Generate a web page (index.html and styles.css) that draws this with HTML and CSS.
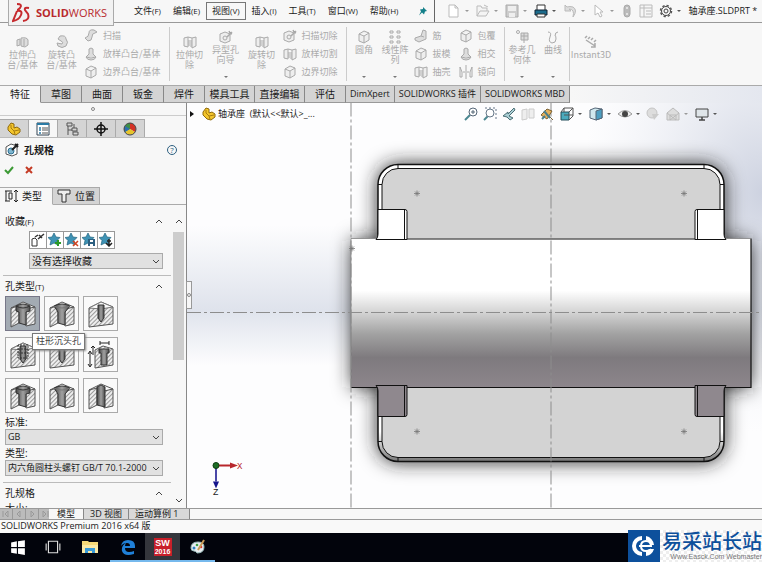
FILE: index.html
```html
<!DOCTYPE html>
<html lang="zh-CN">
<head>
  <meta charset="UTF-8" />
  <meta name="viewport" content="width=device-width, initial-scale=1.0"/>
  <title>SOLIDWORKS</title>
  <link rel="stylesheet" href="styles.css">
</head>
<body>
  <!-- shared icons -->
  <svg class="defs" aria-hidden="true">
    <defs>
      <pattern id="hatch" width="3" height="3" patternUnits="userSpaceOnUse" patternTransform="rotate(45)">
        <rect width="3" height="3" fill="#eee"/>
        <rect width="1" height="3" fill="#999"/>
      </pattern>
      <linearGradient id="bore">
        <stop offset="0" stop-color="#444"/><stop offset=".5" stop-color="#a0a0a0"/><stop offset="1" stop-color="#4a4a4a"/>
      </linearGradient>
      <symbol id="part" viewBox="0 0 14 14">
        <path d="M1 5l3-4 3 1v4l3-1 3 2v3l-4 3-4-1-4-4z" fill="#f3c52c" stroke="#8f6a0c"/>
        <path d="M4 3v3l3 3 5-1M7 9l1 3" fill="none" stroke="#a87d10"/>
      </symbol>
      <symbol id="block" viewBox="0 0 33 33">
        <path d="M5 11l12-6 12 5-12 4z" fill="#fafafa" stroke="#555"/>
        <path d="M5 11l8-2v17l-8 4z" fill="url(#hatch)" stroke="#555"/>
        <path d="M20 12l9-2v17l-9 2z" fill="url(#hatch)" stroke="#555"/>
      </symbol>
      <symbol id="counterbore" viewBox="0 0 33 33">
        <use href="#block"/>
        <path d="M10 9q7-4 14 0v5l-4 1v13l-7-2V15l-3-1z" fill="url(#bore)" stroke="#333"/>
        <path d="M10 9q7 4 14 0" fill="none" stroke="#333"/>
      </symbol>
      <symbol id="countersink" viewBox="0 0 33 33">
        <use href="#block"/>
        <path d="M9 9q8-4 16 0l-5 6v13l-7-2V15z" fill="url(#bore)" stroke="#333"/>
        <path d="M9 9q8 4 16 0" fill="none" stroke="#777"/>
      </symbol>
      <symbol id="drill" viewBox="0 0 33 33">
        <path d="M5 11l12-6 12 5v17l-24 3z" fill="url(#hatch)" stroke="#555"/>
        <path d="M5 11l12-6 12 5-12 2z" fill="#fafafa" stroke="#777"/>
        <path d="M14 8h6v13l-3 4-3-4z" fill="url(#bore)" stroke="#333"/>
      </symbol>
      <symbol id="tap" viewBox="0 0 33 33">
        <use href="#drill"/>
        <path d="M12 7v13h10V7zM12 11h10M12 15h10" fill="none" stroke="#333" stroke-dasharray="2 1"/>
      </symbol>
      <symbol id="legacy" viewBox="0 0 33 33">
        <path d="M11 12l8-4 10 3v16l-18 3z" fill="url(#hatch)" stroke="#555"/>
        <path d="M15 11h10v4h-2v12h-6V15h-2z" fill="url(#bore)" stroke="#333"/>
        <path d="M6 14v14M4 16l2-3 2 3M4 26l2 3 2-3M9 8v9M7 10l2-2 2 2M16 5h9M16 3v4M25 3v4" fill="none" stroke="#222"/>
      </symbol>
      <symbol id="slot" viewBox="0 0 33 33">
        <use href="#block"/>
        <path d="M13 8l4-2 4 2v20l-8-2z" fill="url(#bore)" stroke="#333"/>
      </symbol>
      <symbol id="star" viewBox="0 0 14 14">
        <path d="M6 0l2 4 4 .5-3 3 1 4.500L6 10l-4 2 1-4.500-3-3L4 4z" fill="#3f93b5" stroke="#226480" stroke-width=".7"/>
      </symbol>
      <symbol id="chev-down" viewBox="0 0 8 5"><path d="M1 1l3 3 3-3" fill="none" stroke="#444"/></symbol>
      <symbol id="chev-up" viewBox="0 0 8 5"><path d="M1 4l3-3 3 3" fill="none" stroke="#444"/></symbol>
      <!-- greyed out feature icons -->
      <symbol id="f-box" viewBox="0 0 14 14">
        <path d="M2 4l5-3 5 2v7l-5 3-5-2zM2 4l5 2 5-3M7 6v7" fill="#eee" stroke="currentColor"/>
      </symbol>
      <symbol id="f-extrude" viewBox="0 0 14 14">
        <path d="M1 5l3-1v6l-3 1zM5 3q6-1 7 2v5l-3 2-4-1zM8 4v7" fill="#ddd" stroke="currentColor"/>
      </symbol>
      <symbol id="f-revolve" viewBox="0 0 14 14">
        <path d="M5 1q6-1 6 3 3 3 0 7-4 3-8 0l-1-3 5 1q2-2-1-3L3 4z" fill="#ddd" stroke="currentColor"/>
      </symbol>
      <symbol id="f-sweep" viewBox="0 0 14 14">
        <path d="M1 9q4-1 4-5t5-3l3 2-2 1q-3 0-3 4t-4 4z" fill="#ddd" stroke="currentColor"/>
      </symbol>
      <symbol id="f-loft" viewBox="0 0 14 14">
        <path d="M5 2q2-2 4 0v5l3 3q-1 3-5 3t-5-3l3-3zM2 10q5 2 10 0" fill="#ddd" stroke="currentColor"/>
      </symbol>
      <symbol id="f-cut" viewBox="0 0 14 14">
        <path d="M1 3l4-1v10l-4-1zM9 3l4-1v9l-4 2zM5 2l4 1M6 5v6M8 5v7" fill="#eee" stroke="currentColor"/>
      </symbol>
      <symbol id="f-wizard" viewBox="0 0 14 14">
        <path d="M1 4l5-2 5 2v7l-5 2-5-2z" fill="#eee" stroke="currentColor"/>
        <circle cx="6" cy="8" r="2" fill="none" stroke="currentColor"/>
        <path d="M8 7l5-5M10 1l1 2 2 1" stroke="currentColor" stroke-width="1.500"/>
      </symbol>
      <symbol id="f-pattern" viewBox="0 0 14 14">
        <path d="M2 1h3v2H2zM9 1h3v2H9zM2 6h3v2H2zM9 6h3v2H9zM2 11h3v2H2zM9 11h3v2H9z" fill="none" stroke="currentColor"/>
      </symbol>
      <symbol id="f-rib" viewBox="0 0 14 14">
        <path d="M1 9l6-2 2-6 3 1v8l-7 3-4-2zM7 7l3 1" fill="#ddd" stroke="currentColor"/>
      </symbol>
      <symbol id="f-mirror" viewBox="0 0 14 14">
        <path d="M1 2v10h2V7L1 2M13 2v10h-2V7l2-5M7 0v14M4 7h2M8 7h2" fill="none" stroke="currentColor"/>
      </symbol>
      <symbol id="f-curve" viewBox="0 0 14 14">
        <path d="M2 2q4 0 2 5t2 6q4 0 4-4T9 6q0-4 3-4" fill="none" stroke="currentColor"/>
      </symbol>
      <symbol id="f-ref" viewBox="0 0 14 14">
        <circle cx="3" cy="2" r="1.500" fill="none" stroke="currentColor"/>
        <path d="M6 3h7v7H6zM9 3v10M6 6h7" fill="#ddd" stroke="currentColor"/>
      </symbol>
      <symbol id="f-instant" viewBox="0 0 14 14">
        <path d="M1 3l2-2M4 4l2-2M7 5l2-2M10 7l2-2M2 5l9 6M11 8v4H7" fill="none" stroke="currentColor" stroke-width="1.500"/>
      </symbol>
    </defs>
  </svg>

  <header class="topbar">
    <div class="logo">
      <svg class="logo-mark" viewBox="0 0 20 20">
        <path d="M5 1q6 0 3 4-2 2-3 2" fill="none" stroke="#c62a2e" stroke-width="2"/>
        <path d="M5 8q6-1 4 4-2 5-8 6 2-5 4-10M17 5q-5-1-4 2l3 4q2 6-5 7" fill="none" stroke="#c62a2e" stroke-width="2"/>
      </svg>
      <span class="logo-text"><b>SOLID</b>WORKS</span>
    </div>
    <nav class="menus">
      <button>文件<span class="key">(F)</span></button>
      <button>编辑<span class="key">(E)</span></button>
      <button class="open">视图<span class="key">(V)</span></button>
      <button>插入<span class="key">(I)</span></button>
      <button>工具<span class="key">(T)</span></button>
      <button>窗口<span class="key">(W)</span></button>
      <button>帮助<span class="key">(H)</span></button>
    </nav>
    <button class="pin" aria-label="Pin"><svg viewBox="0 0 10 10"><path d="M5 1l4 4-2 .5-1 3-2-2-3 3 2-4-1-2 3-.5z" fill="#14808a"/></svg></button>
    <div class="quick">
      <button class="off drop" aria-label="New"><svg viewBox="0 0 14 14"><path d="M2 1h6l3 3v9H2zM8 1v3h3" fill="#fff" stroke="#bbb"/></svg></button>
      <button class="off drop" aria-label="Open"><svg viewBox="0 0 14 14"><path d="M1 12V2h4l1 2h5v3M1 12l3-5h9l-3 5zM8 1l4 2" fill="#f4f4f4" stroke="#bbb"/></svg></button>
      <button class="off drop" aria-label="Save"><svg viewBox="0 0 14 14"><path d="M1 1h12v12H1z" fill="#ccc" stroke="#aaa"/><path d="M3 2h8v5H3zM4 9h6v4H4z" fill="#eee"/></svg></button>
      <button class="drop" aria-label="Print"><svg viewBox="0 0 14 14"><path d="M3 1h8v6H3z" fill="#fff" stroke="#333"/><path d="M1 6h12v5H1z" fill="#1c6c8c" stroke="#123"/><path d="M3 10h8v3H3z" fill="#fff" stroke="#333"/></svg></button>
      <button class="off drop" aria-label="Undo"><svg viewBox="0 0 14 14"><path d="M2 1v6h6L6 5q6 0 4 8 5-7 0-10-3-1-6 0z" fill="#ddd" stroke="#bbb"/></svg></button>
      <button class="off drop" aria-label="Select"><svg viewBox="0 0 14 14"><path d="M3 1v10l3-2 2 4 2-1-2-4h3z" fill="#fff" stroke="#bbb"/></svg></button>
      <button class="off" aria-label="Rebuild"><svg viewBox="0 0 14 14"><rect x="4" y="1" width="6" height="12" rx="3" fill="#bbb" stroke="#aaa"/><circle cx="7" cy="4" r="1" fill="#eee"/><circle cx="7" cy="10" r="1" fill="#eee"/></svg></button>
      <button class="off" aria-label="Properties"><svg viewBox="0 0 14 14"><path d="M1 1h12v12H1zM5 1v12M1 4h12M7 7h5M7 10h5" fill="#f6f6f6" stroke="#bbb"/></svg></button>
      <button class="drop" aria-label="Options"><svg viewBox="0 0 14 14"><circle cx="7" cy="7" r="5.500" fill="none" stroke="#555" stroke-width="1.500" stroke-dasharray="2.300 2"/><circle cx="7" cy="7" r="4.500" fill="#f6f6f6" stroke="#444"/><circle cx="7" cy="7" r="2" fill="none" stroke="#444"/></svg></button>
    </div>
    <span class="doc-name">轴承座.SLDPRT *</span>
  </header>

  <section class="ribbon">
    <div class="group">
      <button class="big low wide"><svg><use href="#f-extrude"/></svg><span>拉伸凸<br>台/基体</span></button>
      <button class="big low wide"><svg><use href="#f-revolve"/></svg><span>旋转凸<br>台/基体</span></button>
      <div class="stack">
        <button><svg><use href="#f-sweep"/></svg>扫描</button>
        <button><svg><use href="#f-loft"/></svg>放样凸台/基体</button>
        <button><svg><use href="#f-box"/></svg>边界凸台/基体</button>
      </div>
    </div>
    <div class="group">
      <button class="big low"><svg><use href="#f-cut"/></svg><span>拉伸切<br>除</span></button>
      <button class="big arrow"><svg><use href="#f-wizard"/></svg><span>异型孔<br>向导</span></button>
      <button class="big low"><svg><use href="#f-cut"/></svg><span>旋转切<br>除</span></button>
      <div class="stack">
        <button><svg><use href="#f-wizard"/></svg>扫描切除</button>
        <button><svg><use href="#f-cut"/></svg>放样切割</button>
        <button><svg><use href="#f-box"/></svg>边界切除</button>
      </div>
    </div>
    <div class="group">
      <button class="big arrow slim"><svg><use href="#f-box"/></svg><span>圆角</span></button>
      <button class="big arrow slim"><svg><use href="#f-pattern"/></svg><span>线性阵<br>列</span></button>
      <div class="stack">
        <button><svg><use href="#f-rib"/></svg>筋</button>
        <button><svg><use href="#f-box"/></svg>拔模</button>
        <button><svg><use href="#f-cut"/></svg>抽壳</button>
      </div>
      <div class="stack">
        <button><svg><use href="#f-box"/></svg>包覆</button>
        <button><svg><use href="#f-loft"/></svg>相交</button>
        <button><svg><use href="#f-mirror"/></svg>镜向</button>
      </div>
    </div>
    <div class="group tight">
      <button class="big arrow slim"><svg><use href="#f-ref"/></svg><span>参考几<br>何体</span></button>
      <button class="big arrow slim"><svg><use href="#f-curve"/></svg><span>曲线</span></button>
    </div>
    <div class="group">
      <button class="big low wide"><svg><use href="#f-instant"/></svg><span>Instant3D</span></button>
    </div>
  </section>

  <nav class="tabs">
    <button class="active">特征</button>
    <button>草图</button>
    <button>曲面</button>
    <button>钣金</button>
    <button>焊件</button>
    <button class="wide">模具工具</button>
    <button class="wide">直接编辑</button>
    <button>评估</button>
    <button class="fit">DimXpert</button>
    <button class="fit">SOLIDWORKS 插件</button>
    <button class="fit">SOLIDWORKS MBD</button>
  </nav>

  <main class="work">
    <aside class="panel">
      <div class="grip"><i></i></div>
      <nav class="manager">
        <button aria-label="FeatureManager"><svg viewBox="0 0 14 14"><use href="#part"/></svg></button>
        <button class="active" aria-label="PropertyManager"><svg viewBox="0 0 14 14"><path d="M1 1h12v12H1z" fill="#fff" stroke="#345"/><path d="M1 1h12v2H1z" fill="#2b7ba5"/><path d="M3 6h2M3 8h2M3 11h2" stroke="#2b7ba5" stroke-width="1.500"/><path d="M6 6h6M6 8h6M6 11h6" stroke="#555"/></svg></button>
        <button aria-label="ConfigurationManager"><svg viewBox="0 0 14 14"><path d="M2 1h5v3H2zM3 4v9M3 8h4M7 6h5v3H7zM8 10h5v3H8zM9 2v4" fill="none" stroke="#555"/></svg></button>
        <button aria-label="DimXpertManager"><svg viewBox="0 0 14 14"><circle cx="7" cy="7" r="4" fill="none" stroke="#111" stroke-width="1.500"/><path d="M7 0v14M0 7h14" stroke="#111" stroke-width="1.500"/></svg></button>
        <button aria-label="DisplayManager"><svg viewBox="0 0 14 14"><path d="M7 7V1a6 6 0 0 0-5 9z" fill="#3f8f46"/><path d="M7 7V1a6 6 0 0 1 5 9z" fill="#d33226"/><path d="M7 7l5 3a6 6 0 0 1-10 0z" fill="#e6c42c"/><path d="M7 7L2 10a6 6 0 0 1 0-6z" fill="#2d6fb0"/><circle cx="7" cy="7" r="6" fill="none" stroke="#444"/></svg></button>
      </nav>
      <div class="panel-title">
        <svg class="i14" viewBox="0 0 14 14"><path d="M1 4l5-3 6 2v8l-5 2-6-2z" fill="#fff" stroke="#555"/><circle cx="6" cy="8" r="3" fill="#7fb6cf" stroke="#2b6f92"/><path d="M7 7l6-6M10 1l3 3" stroke="#222" stroke-width="2"/></svg>
        <h1>孔规格</h1>
        <button class="help" aria-label="Help">?</button>
      </div>
      <div class="confirm">
        <button aria-label="OK"><svg viewBox="0 0 10 10"><path d="M1 5l3 3 5-6" fill="none" stroke="#3c9a35" stroke-width="2"/></svg></button>
        <button aria-label="Cancel"><svg viewBox="0 0 10 10"><path d="M2 2l6 6M8 2L2 8" stroke="#c43a24" stroke-width="2"/></svg></button>
      </div>
      <nav class="subtabs">
        <button class="active"><svg viewBox="0 0 14 14"><path d="M1 2h7M1 12h5M2 2v10M5 4v6h3V4zM12 1v12M10 3l2-2 2 2M10 11l2 2 2-2" fill="none" stroke="#222"/></svg>类型</button>
        <button><svg viewBox="0 0 14 14"><path d="M1 1h12v4H9v8H5V5H1z" fill="#eee" stroke="#333"/></svg>位置</button>
      </nav>
      <div class="scroll-area">
        <div class="props">
          <section class="favorites">
            <h2>收藏<span class="key">(F)</span><svg><use href="#chev-up"/></svg></h2>
            <div class="fav-tools">
              <button aria-label="Apply defaults"><svg viewBox="0 0 14 14"><path d="M1 6l3-1 2 2v6H1z" fill="#fff" stroke="#333"/><path d="M4 4l3-2M7 6l6-5M8 2l3 3" fill="none" stroke="#333" stroke-width="1.500"/></svg></button>
              <button aria-label="Add"><svg viewBox="0 0 14 14"><use href="#star"/><path d="M10 7v6M7 10h6" stroke="#2b9a28" stroke-width="2"/></svg></button>
              <button aria-label="Delete"><svg viewBox="0 0 14 14"><use href="#star"/><path d="M8 8l5 5M13 8l-5 5" stroke="#d0431f" stroke-width="1.500"/></svg></button>
              <button aria-label="Save"><svg viewBox="0 0 14 14"><use href="#star"/><path d="M6 6h7v7H6z" fill="#2c5f80"/><path d="M8 7h3v2H8zM8 11h3v2H8z" fill="#fff"/></svg></button>
              <button aria-label="Load"><svg viewBox="0 0 14 14"><use href="#star"/><path d="M10 6v7M7 10l3 3 3-3M8 8h4" fill="none" stroke="#222" stroke-width="1.500"/></svg></button>
            </div>
            <div class="select indent">
              <select aria-label="收藏"><option>没有选择收藏</option></select>
              <svg><use href="#chev-down"/></svg>
            </div>
          </section>
          <section class="hole-type">
            <h2>孔类型<span class="key">(T)</span><svg><use href="#chev-up"/></svg></h2>
            <div class="holes">
              <button class="selected" aria-label="柱形沉头孔"><svg><use href="#counterbore"/></svg><span class="tooltip">柱形沉头孔</span></button>
              <button aria-label="锥形沉头孔"><svg><use href="#countersink"/></svg></button>
              <button aria-label="孔"><svg><use href="#drill"/></svg></button>
              <button aria-label="直螺纹孔"><svg><use href="#tap"/></svg></button>
              <button aria-label="锥形螺纹孔"><svg><use href="#drill"/></svg></button>
              <button aria-label="旧制孔"><svg><use href="#legacy"/></svg></button>
              <button aria-label="柱孔槽口"><svg><use href="#counterbore"/></svg></button>
              <button aria-label="锥孔槽口"><svg><use href="#countersink"/></svg></button>
              <button aria-label="槽口"><svg><use href="#slot"/></svg></button>
            </div>
            <label for="standard">标准:</label>
            <div class="select compact">
              <select id="standard"><option>GB</option></select>
              <svg><use href="#chev-down"/></svg>
            </div>
            <label for="kind">类型:</label>
            <div class="select compact">
              <select id="kind"><option>内六角圆柱头螺钉 GB/T 70.1-2000</option></select>
              <svg><use href="#chev-down"/></svg>
            </div>
          </section>
          <section class="spec">
            <h2>孔规格<svg><use href="#chev-up"/></svg></h2>
            <label>大小:</label>
          </section>
        </div>
        <div class="scrollbar">
          <svg><use href="#chev-up"/></svg>
          <div class="track"><div class="thumb"></div></div>
          <svg><use href="#chev-down"/></svg>
        </div>
      </div>
      <button class="collapse" aria-label="Collapse panel"><i></i></button>
    </aside>

    <section class="viewport">
      <svg class="model" viewBox="187 102 575 406" preserveAspectRatio="xMidYMid slice">
        <defs>
          <linearGradient id="cyl" x2="0" y2="1">
            <stop offset="0" stop-color="#fff"/><stop offset=".35" stop-color="#fff"/>
            <stop offset=".5" stop-color="#d2d2d2"/><stop offset=".64" stop-color="#a2a2a2"/>
            <stop offset=".8" stop-color="#7e7a7e"/><stop offset="1" stop-color="#8d868c"/>
          </linearGradient>
          <linearGradient id="band" x2="0" y2="1">
            <stop offset="0" stop-color="#dfe3ec" stop-opacity="0"/><stop offset=".6" stop-color="#dfe3ec"/>
            <stop offset="1" stop-color="#dfe3ec" stop-opacity="0"/>
          </linearGradient>
          <linearGradient id="rim" x2="0" y2="1">
            <stop offset="0" stop-color="#fff"/><stop offset=".9" stop-color="#fff"/><stop offset="1" stop-color="#777"/>
          </linearGradient>
          <radialGradient id="corner" cx="1" cy=".35" r=".6">
            <stop offset="0" stop-color="#cdd2e0"/><stop offset="1" stop-color="#e8ebf2" stop-opacity="0"/>
          </radialGradient>
          <filter id="shade" x="-20%" y="-20%" width="140%" height="140%"><feGaussianBlur stdDeviation="10"/></filter>
          <g id="spot" stroke="#777"><path d="M-3 0h6M0-3v6M-2-2l4 4M2-2l-4 4" stroke-width=".8"/></g>
        </defs>
        <rect x="187" y="102" width="575" height="406" fill="#fdfdfe"/>
        <rect x="187" y="225" width="575" height="140" fill="url(#band)"/>
        <rect x="462" y="52" width="300" height="400" fill="url(#corner)"/>
        <g filter="url(#shade)" fill="#222">
          <rect x="378" y="164" width="346" height="297" rx="20"/>
          <rect x="353" y="240" width="397" height="147"/>
        </g>
        <rect x="378" y="164" width="346" height="297" rx="20" fill="url(#rim)" stroke="#111" stroke-width="1.500"/>
        <rect x="382" y="168" width="338" height="289" rx="16" fill="#d3d3d3" stroke="#111"/>
        <path d="M398 164v4M704 164v4M378 184h4M720 184h4M398 457v4M704 457v4M378 441h4M720 441h4" stroke="#111"/>
        <rect x="351" y="238" width="400" height="149" fill="url(#cyl)"/>
        <path d="M351 387h400V238M398 238.500h300" fill="none" stroke="#111" stroke-width="1.200"/>
        <path d="M351 238h26M724 238h27M351 238v149" stroke="#777" stroke-width=".7"/>
        <path d="M378 209h27q2 0 2 2v28h-31q2-2 2-5zM724 209h-27q-2 0-2 2v28h31q-2-2-2-5z" fill="#fff" stroke="#111"/>
        <path d="M378 416h27q2 0 2-2v-29h-31q2 2 2 5zM724 416h-27q-2 0-2-2v-29h31q-2 2-2 5z" fill="#8f888e" stroke="#111"/>
        <path d="M404.500 209v30M697.500 209v30M404.500 385v31M697.500 385v31" stroke="#111"/>
        <g fill="none" stroke="#8d8d8d" stroke-dasharray="14 3 3 3">
          <path d="M351 102v406M551 102v406M187 312h575"/>
        </g>
        <use href="#spot" x="417" y="193"/><use href="#spot" x="684" y="193"/>
        <use href="#spot" x="417" y="431"/><use href="#spot" x="684" y="431"/>
        <use href="#spot" x="352" y="248"/>
        <path d="M216 465h16" stroke="#b8272c" stroke-width="2"/><path d="M230 462l8 3-8 3z" fill="#b8272c"/>
        <path d="M216 465v16" stroke="#4a48a8" stroke-width="2"/><path d="M213 481l3 7 3-7z" fill="#14148c"/>
        <circle cx="216" cy="465" r="3" fill="#1d6d25" stroke="#0d3d12"/>
        <text x="237" y="468" class="axis axis-x">X</text>
        <text x="213" y="494" class="axis">Z</text>
      </svg>
      <div class="overlay">
        <button class="tree"><svg class="tri" viewBox="0 0 4 6"><path d="M0 0l4 3-4 3z" fill="#111"/></svg><svg class="i14"><use href="#part"/></svg>轴承座&nbsp; (默认&lt;&lt;默认&gt;_...</button>
        <div class="hud">
          <button aria-label="Zoom to fit"><svg viewBox="0 0 14 14"><path d="M1 13l5-5" stroke="#4b8790" stroke-width="2"/><circle cx="9" cy="5" r="4" fill="#fff" stroke="#567"/><path d="M7 5h4M9 3v4" stroke="#567"/></svg></button>
          <button aria-label="Zoom to area"><svg viewBox="0 0 14 14"><path d="M1 13l4-4" stroke="#4b8790" stroke-width="2"/><circle cx="7" cy="6" r="4" fill="#fff" stroke="#678"/><path d="M2 1h11v11" fill="none" stroke="#678" stroke-dasharray="2 2"/></svg></button>
          <button aria-label="Previous view"><svg viewBox="0 0 14 14"><path d="M1 9l5-4v2l6-6 1 2-6 6 4 2-3 2-3-3z" fill="#a9cdd3" stroke="#4a6e75"/></svg></button>
          <button class="off" aria-label="Section view"><svg viewBox="0 0 14 14"><path d="M1 3l5-1v10l-5 1zM8 2h5v9H8z" fill="#eee" stroke="#ccc"/></svg></button>
          <button aria-label="Annotations"><svg viewBox="0 0 14 14"><path d="M1 8l6-6 5 2-5 8zM8 8l5 5" fill="#e6b15b" stroke="#7b6234"/><path d="M2 12l3-3M4 4l6 7" stroke="#4a7f8c" stroke-width="2"/></svg></button>
          <button class="drop" aria-label="View orientation"><svg viewBox="0 0 14 14"><path d="M1 5h8v8H1z" fill="#4baabd" stroke="#224c58"/><path d="M1 5l3-4h9v8l-4 4M4 1v4M9 5l4-4M4 8h9" fill="none" stroke="#555"/></svg></button>
          <button class="drop" aria-label="Display style"><svg viewBox="0 0 14 14"><path d="M1 3l5-2 7 1v9l-6 2-6-2z" fill="#cfe8ee" stroke="#567"/><path d="M7 4l6-2v9l-6 2z" fill="#4c9ec0" stroke="#567"/></svg></button>
          <button class="drop" aria-label="Hide or show items"><svg viewBox="0 0 14 14"><path d="M0 7q7-7 14 0-7 6-14 0z" fill="#eee" stroke="#999"/><circle cx="7" cy="7" r="3" fill="#444"/></svg></button>
          <button class="off" aria-label="Edit appearance"><svg viewBox="0 0 14 14"><circle cx="6" cy="6" r="5" fill="#ddd" stroke="#c5c5c5"/><path d="M6 7h7l-5 6z" fill="#ccc"/></svg></button>
          <button class="off drop" aria-label="Apply scene"><svg viewBox="0 0 14 14"><path d="M1 6l6-5 6 5v7H1z" fill="#ddd" stroke="#bbb"/><path d="M4 13V8h6v5M1 6l9 7M13 6l-9 7" stroke="#bbb" fill="none"/></svg></button>
          <button class="drop" aria-label="View settings"><svg viewBox="0 0 14 14"><path d="M1 2h12v8H1z" fill="#dfe5e9" stroke="#444"/><path d="M7 10v3M4 13h6" stroke="#444" stroke-width="1.500"/></svg></button>
        </div>
      </div>
    </section>
  </main>

  <nav class="sheet-tabs">
    <div class="steps">
      <button aria-label="First"><svg viewBox="0 0 8 8"><path d="M1 1v6M6 1L3 4l3 3z"/></svg></button>
      <button aria-label="Previous"><svg viewBox="0 0 8 8"><path d="M5 1L2 4l3 3z"/></svg></button>
      <button aria-label="Next"><svg viewBox="0 0 8 8"><path d="M3 1l3 3-3 3z"/></svg></button>
      <button aria-label="Last"><svg viewBox="0 0 8 8"><path d="M7 1v6M2 1l3 3-3 3z"/></svg></button>
    </div>
    <button class="active">模型</button>
    <button>3D 视图</button>
    <button class="long">运动算例 1</button>
  </nav>
  <footer class="status">SOLIDWORKS Premium 2016 x64 版</footer>

  <div class="taskbar">
    <button aria-label="Start"><svg viewBox="0 0 14 14"><path d="M1 3l5-1v5H1zM7 2l6-1v6H7zM1 8h5v5l-5-1zM7 8h6v6l-6-1z" fill="#fff"/></svg></button>
    <button aria-label="Task view"><svg viewBox="0 0 14 14"><path d="M3 2h8v10H3zM1 4v6M13 4v6" fill="none" stroke="#ddd"/></svg></button>
    <button class="files" aria-label="File Explorer"><svg viewBox="0 0 16 14"><path d="M0 1h6l1 1h9v11H0z" fill="#f6d978"/><path d="M0 5h16v8H0z" fill="#fbeaa6"/><path d="M3 8h10v5h-3v-2H6v2H3z" fill="#3a9bd8"/></svg></button>
    <button class="running" aria-label="Edge"><svg viewBox="0 0 16 16"><path d="M1 7q1-6 7-6 7 0 7 6v2H5q0 4 4 4 3 0 5-1v3q-10 3-12-3-1-5 4-8-1 2-1 3h5q0-3-3-3-4 0-6 3z" fill="#1f80d8"/></svg></button>
    <button class="running current" aria-label="SOLIDWORKS 2016">
      <span class="sw">SW<small>2016</small></span>
    </button>
    <button class="running" aria-label="Paint"><svg viewBox="0 0 16 16"><path d="M1 9q0-6 7-6 6 0 6 5 0 6-7 6-1-2-3-2-3 0-3-3z" fill="#e9edf0" stroke="#9bb"/><circle cx="4" cy="9" r="1.500" fill="#2e7fc0"/><circle cx="7" cy="6" r="1.300" fill="#3da045"/><circle cx="11" cy="8" r="1.300" fill="#d33"/><path d="M8 11l6-10" stroke="#c99a55" stroke-width="2"/></svg></button>
  </div>

  <div class="watermark">
    <div class="mark"><svg viewBox="0 0 32 32"><path d="M14 6a10 10 0 0 0 0 20v-4a6 6 0 0 1 0-12zM18 6a10 10 0 0 1 8 9h-4a6 6 0 0 0-4-5zM18 26a10 10 0 0 0 8-7h-5l-3 3z" fill="#fff"/><path d="M11 16h12q0-5-5-5t-5 5 5 5 4-2" fill="none" stroke="#fff" stroke-width="2"/></svg></div>
    <div class="mark-text"><strong>易采站长站</strong><span>Www.Easck.Com Webmaster</span></div>
  </div>
</body>
</html>
```

FILE: styles.css
```css
* {
  box-sizing: border-box;
}
body {
  margin: 0;
  height: 100vh;
  display: flex;
  flex-direction: column;
  overflow: hidden;
  position: relative;
  font-family: "Open Sans", "Noto Sans CJK SC", sans-serif;
  font-size: 10px;
  line-height: 10px;
  color: #1a1a1a;
  background: #f7f7f7;
}
button {
  padding: 0;
  border: none;
  background: none;
  font: inherit;
  color: inherit;
  white-space: nowrap;
}
button svg {
  display: block;
  flex: none;
  width: 14px;
  height: 14px;
}
h1, h2 {
  margin: 0;
  font-size: 10px;
}
.defs {
  position: absolute;
  width: 0;
  height: 0;
}
.i14 {
  width: 14px;
  height: 14px;
}
.key {
  font-size: 8px;
}

/* title bar */
.topbar {
  flex: none;
  height: 23px;
  display: flex;
  align-items: center;
  font-size: 9px;
  border-bottom: 1px solid #999;
}
.logo {
  align-self: flex-start;
  flex: none;
  width: 106px;
  height: 26px;
  margin-left: 8px;
  padding-left: 3px;
  display: flex;
  align-items: center;
  gap: 4px;
  background: #f2f2f2;
  border: 1px solid #aaa;
  border-top: none;
  color: #b8292d;
  position: relative;
  z-index: 1;
}
.logo-mark {
  width: 20px;
  height: 20px;
}
.logo-text {
  font-size: 11px;
}
.menus {
  display: flex;
  margin-left: 14px;
}
.menus button {
  height: 18px;
  padding: 0 5px;
  border: 1px solid transparent;
}
.menus .open {
  border-color: #777;
}
.pin {
  margin: 0 6px 0 14px;
}
.pin svg {
  width: 10px;
  height: 10px;
}
.quick {
  display: flex;
  align-self: stretch;
  align-items: center;
  padding-left: 8px;
  border-left: 1px solid #666;
}
.quick button {
  width: 19px;
  display: flex;
  justify-content: center;
}
.quick .drop {
  width: 29px;
}
.drop {
  align-items: center;
  gap: 4px;
}
.drop::after {
  content: "";
  border: 2px solid transparent;
  border-top-color: #555;
  border-bottom: none;
}
.off.drop::after {
  border-top-color: #999;
}
.doc-name {
  margin-left: 4px;
  white-space: nowrap;
}

/* ribbon */
.ribbon {
  flex: none;
  height: 63px;
  display: flex;
  padding-left: 1px;
  font-family: "Noto Sans CJK SC", sans-serif;
  font-size: 9px;
  color: #aaa;
  border-bottom: 1px solid #aaa;
}
.group {
  display: flex;
  margin: 4px 0;
  padding: 0 8px 0 2px;
  border-right: 1px solid #ccc;
}
.group.tight {
  padding-right: 0;
}
.group:last-child {
  border-right: none;
}
.big {
  width: 36px;
  display: flex;
  flex-direction: column;
  align-items: center;
  gap: 1px;
  padding-top: 3px;
}
.big.wide {
  width: 39px;
}
.big.slim {
  width: 31px;
}
.big.low {
  padding-top: 8px;
}
.big.arrow::after {
  content: "";
  margin: auto 0 3px;
  border: 2px solid transparent;
  border-top-color: #777;
  border-bottom: none;
}
.stack {
  display: flex;
  flex-direction: column;
  justify-content: space-between;
}
.stack + .stack {
  margin-left: 5px;
}
.stack button {
  display: flex;
  align-items: center;
  gap: 5px;
  height: 18px;
  padding-left: 3px;
}

/* command tabs */
.tabs {
  flex: none;
  height: 17px;
  display: flex;
  background: linear-gradient(90deg, #f7f7f7 75%, #e4e7ef);
}
.tabs button {
  width: 41px;
  background: #d4d4d4;
  border-right: 1px solid #888;
  border-bottom: 1px solid #999;
}
.tabs .wide {
  width: 50px;
}
.tabs .fit {
  width: auto;
  padding: 0 4px;
  font-size: 9px;
}
.tabs .active {
  background: #f7f7f7;
  border-bottom-color: #f7f7f7;
}

/* work area */
.work {
  flex: 1;
  min-height: 0;
  display: flex;
}
.panel {
  flex: none;
  width: 187px;
  display: flex;
  flex-direction: column;
  position: relative;
  border-right: 1px solid #888;
}
.grip {
  flex: none;
  height: 13px;
  display: flex;
  align-items: center;
  justify-content: center;
  border-bottom: 1px solid #ccc;
}
.grip i, .collapse i {
  width: 4px;
  height: 4px;
  border: 1px solid #888;
  border-radius: 50%;
}
.manager {
  flex: none;
  display: flex;
  height: 22px;
  padding-top: 3px;
  border-bottom: 1px solid #bbb;
}
.manager button {
  width: 29px;
  display: flex;
  align-items: center;
  justify-content: center;
  background: #d4d4d4;
  border: 1px solid #aaa;
  border-width: 1px 1px 0 0;
}
.manager .active {
  background: #f7f7f7;
}
.panel-title {
  flex: none;
  display: flex;
  align-items: center;
  gap: 5px;
  height: 24px;
  padding: 0 9px 0 5px;
}
.help {
  margin-left: auto;
  width: 10px;
  height: 10px;
  line-height: 8px;
  border: 1px solid #2c5f80;
  border-radius: 50%;
  font-size: 8px;
  color: #2c5f80;
}
.confirm {
  flex: none;
  display: flex;
  gap: 10px;
  height: 25px;
  padding: 3px 0 0 4px;
}
.confirm button {
  align-self: flex-start;
}
.confirm svg {
  width: 10px;
  height: 10px;
}
.subtabs {
  flex: none;
  display: flex;
  height: 18px;
  border-bottom: 1px solid #aaa;
}
.subtabs button {
  display: flex;
  align-items: center;
  gap: 4px;
  height: 18px;
  padding: 0 4px;
  background: #d4d4d4;
  border: 1px solid #aaa;
  border-left: none;
}
.subtabs .active {
  padding-right: 10px;
  background: #f7f7f7;
  border-bottom-color: #f7f7f7;
}
.scroll-area {
  flex: 1;
  min-height: 0;
  display: flex;
  padding-right: 2px;
}
.props {
  flex: 1;
  overflow: hidden;
  padding: 0 2px 0 3px;
}
.props section {
  padding: 5px 8px 6px 2px;
  border-bottom: 1px solid #bbb;
}
.props .favorites {
  padding-top: 11px;
}
.props h2 {
  display: flex;
  align-items: center;
  height: 10px;
  font-weight: normal;
}
.props h2 svg {
  width: 8px;
  height: 5px;
  margin-left: auto;
}
.props .favorites .key, .props .hole-type .key {
  margin-top: 1px;
}
.fav-tools {
  display: flex;
  margin: 5px 0 4px 24px;
}
.fav-tools button {
  width: 18px;
  height: 18px;
  margin-right: -1px;
  display: flex;
  align-items: center;
  justify-content: center;
  background: #fff;
  border: 1px solid #999;
}
.select {
  display: grid;
  align-items: center;
}
.select.indent {
  margin-left: 24px;
}
.select select, .select svg {
  grid-area: 1 / 1;
}
.select select {
  appearance: none;
  width: 100%;
  height: 16px;
  padding: 0 2px;
  border: 1px solid #aaa;
  border-radius: 0;
  background: #e1e1e1;
  font: inherit;
  color: inherit;
}
.select.compact {
  font-size: 9px;
}
.select svg {
  justify-self: end;
  width: 8px;
  height: 5px;
  margin-right: 3px;
  pointer-events: none;
}
.holes {
  display: grid;
  grid-template-columns: repeat(3, 35px);
  gap: 6px 4px;
  margin: 5px 0 4px;
}
.holes button {
  height: 35px;
  border: 1px solid #aaa;
  background: #fafafa;
  position: relative;
}
.holes button svg {
  width: 33px;
  height: 33px;
}
.holes .selected {
  background: #a3abb3;
  border-color: #778;
}
.tooltip {
  position: absolute;
  z-index: 2;
  left: 26px;
  top: 36px;
  padding: 2px 3px 3px;
  background: #fff;
  border: 1px solid #777;
  box-shadow: 1px 1px 2px #888;
  font-size: 9px;
  color: #444;
}
.props label {
  display: block;
  margin: 3px 0 2px;
}
.props .spec h2 {
  margin-bottom: 5px;
}
.scrollbar {
  flex: none;
  width: 11px;
  display: flex;
  flex-direction: column;
  align-items: center;
  padding: 14px 0 5px;
}
.scrollbar svg {
  width: 8px;
  height: 5px;
}
.track {
  flex: 1;
  align-self: stretch;
  margin: 8px 0 4px;
}
.thumb {
  height: 49%;
  background: #cdcdcd;
}
.collapse {
  position: absolute;
  z-index: 1;
  right: -6px;
  top: 44%;
  width: 6px;
  height: 28px;
  display: flex;
  align-items: center;
  justify-content: center;
  background: #f7f7f7;
  border: 1px solid #999;
}

/* graphics area */
.viewport {
  flex: 1;
  min-width: 0;
  position: relative;
}
.model {
  display: block;
  width: 100%;
  height: 100%;
}
.axis {
  font-family: "Liberation Mono", monospace;
  font-size: 9px;
  fill: #222;
}
.axis-x {
  fill: #b8272c;
}
.overlay {
  position: absolute;
  top: 0;
  left: 0;
  right: 0;
  display: flex;
  align-items: center;
  justify-content: space-between;
  height: 22px;
  padding: 0 42px 0 3px;
}
.tree {
  display: flex;
  align-items: center;
  gap: 2px;
  font-size: 9px;
}
.tree .tri {
  width: 4px;
  height: 6px;
  margin-right: 6px;
}
.hud {
  display: flex;
}
.hud button {
  width: 19px;
  display: flex;
  justify-content: center;
}
.hud .drop {
  width: 29px;
}

/* bottom bars */
.sheet-tabs {
  flex: none;
  display: flex;
  height: 12px;
  font-size: 9px;
  border: 1px solid #999;
  border-width: 1px 0;
}
.sheet-tabs button {
  padding: 0 6px;
  background: #d9d9d9;
  border-right: 1px solid #888;
}
.sheet-tabs .active {
  padding: 0 8px;
  background: #f7f7f7;
}
.sheet-tabs .long {
  padding-right: 10px;
}
.steps {
  display: flex;
  width: 49px;
}
.steps button {
  flex: 1;
  padding: 0 2px;
  background: #bbb;
  border-color: #999;
}
.steps svg {
  width: 8px;
  height: 8px;
  fill: none;
  stroke: #999;
}
.status {
  flex: none;
  height: 13px;
  padding: 1px;
  font-size: 9px;
  background: #f9f9f9;
}
.taskbar {
  flex: none;
  height: 29px;
  display: flex;
  background: #02040c;
}
.taskbar button {
  width: 35px;
  display: flex;
  align-items: center;
  justify-content: center;
  border-bottom: 2px solid transparent;
}
.taskbar svg {
  width: 16px;
  height: 16px;
}
.taskbar .files {
  width: 40px;
}
.taskbar .running {
  border-bottom-color: #76b9ed;
}
.taskbar .current {
  background: #34363c;
}
.sw {
  width: 18px;
  height: 18px;
  background: #c8202a;
  color: #fff;
  font-family: "Liberation Sans", sans-serif;
  font-size: 9px;
  font-weight: bold;
  line-height: 10px;
}
.sw small {
  display: block;
  font-size: 7px;
  line-height: 8px;
}
.watermark {
  position: absolute;
  right: 0;
  bottom: 0;
  display: flex;
  height: 32px;
  background: #fff;
}
.mark {
  width: 32px;
  height: 32px;
  background: #0d509c;
}
.mark-text {
  display: flex;
  flex-direction: column;
  align-items: flex-end;
  padding-left: 2px;
  background: repeating-conic-gradient(#eee 0 25%, #fff 0 50%) 0 0 / 6px 6px;
}
.mark-text strong {
  font-size: 20px;
  font-weight: 500;
  line-height: 23px;
  color: #0d509c;
}
.mark-text span {
  font-family: "Liberation Sans", sans-serif;
  font-size: 7px;
  line-height: 8px;
  color: #777;
}
```
